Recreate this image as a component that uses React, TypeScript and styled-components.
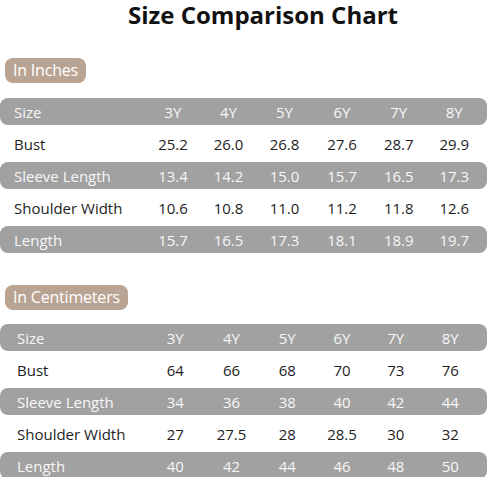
import React from "react";
import styled, { createGlobalStyle } from "styled-components";

const Global = createGlobalStyle`
  html, body { margin: 0; padding: 0; background: #fff; }
  body { font-family: "Open Sans", "Noto Sans", sans-serif; width: 488px; overflow: hidden; }
`;

const Page = styled.div`
  display: flex;
  flex-direction: column;
  width: 488px;
  height: 477px;
`;

const Title = styled.h1`
  margin: 0;
  font-size: 24px;
  line-height: 30px;
  font-weight: 700;
  color: #111;
  text-align: center;
  padding-left: 38px;
`;

const Pill = styled.div<{ $top: number }>`
  align-self: flex-start;
  margin: ${(p) => p.$top}px 0 0 5px;
  height: 25px;
  padding: 0 8px;
  border-radius: 8px;
  background: #b9a493;
  color: #fff;
  font-size: 16px;
  letter-spacing: -0.2px;
  line-height: 25px;
`;

const Table = styled.div<{ $top: number }>`
  display: flex;
  flex-direction: column;
  margin-top: ${(p) => p.$top}px;
  width: 487px;
`;

const Row = styled.div<{ $shade: boolean; $cols: string }>`
  display: grid;
  grid-template-columns: ${(p) => p.$cols};
  align-items: center;
  height: ${(p) => (p.$shade ? 27 : 37)}px;
  border-radius: 8px;
  background: ${(p) => (p.$shade ? "#a1a1a1" : "transparent")};
  color: ${(p) => (p.$shade ? "#f7f7f7" : "#1e1e1e")};
  font-size: 15px;
`;

const Label = styled.span<{ $pad: number }>`
  padding-left: ${(p) => p.$pad}px;
  white-space: nowrap;
`;

const Cell = styled.span`
  text-align: center;
`;

type Tbl = { head: string[]; rows: [string, string[]][]; cols: string; pad: number };

const sizes = ["3Y", "4Y", "5Y", "6Y", "7Y", "8Y"];

const inches: Tbl = {
  head: sizes,
  cols: "145px 56px 55px 57px 58px 55.5px 55.5px",
  pad: 14,
  rows: [
    ["Bust", ["25.2", "26.0", "26.8", "27.6", "28.7", "29.9"]],
    ["Sleeve Length", ["13.4", "14.2", "15.0", "15.7", "16.5", "17.3"]],
    ["Shoulder Width", ["10.6", "10.8", "11.0", "11.2", "11.8", "12.6"]],
    ["Length", ["15.7", "16.5", "17.3", "18.1", "18.9", "19.7"]],
  ],
};

const cms: Tbl = {
  head: sizes,
  cols: "147px 56.5px 56px 55.5px 54px 53.5px 55.5px",
  pad: 17,
  rows: [
    ["Bust", ["64", "66", "68", "70", "73", "76"]],
    ["Sleeve Length", ["34", "36", "38", "40", "42", "44"]],
    ["Shoulder Width", ["27", "27.5", "28", "28.5", "30", "32"]],
    ["Length", ["40", "42", "44", "46", "48", "50"]],
  ],
};

function SizeTable({ data, top }: { data: Tbl; top: number }) {
  const all: [string, string[]][] = [["Size", data.head], ...data.rows];
  return (
    <Table $top={top}>
      {all.map(([label, vals], i) => (
        <Row key={label} $shade={i % 2 === 0} $cols={data.cols}>
          <Label $pad={data.pad}>{label}</Label>
          {vals.map((v, j) => (
            <Cell key={j}>{v}</Cell>
          ))}
        </Row>
      ))}
    </Table>
  );
}

export default function App() {
  return (
    <Page>
      <Global />
      <Title>Size Comparison Chart</Title>
      <Pill $top={28}>In Inches</Pill>
      <SizeTable data={inches} top={15} />
      <Pill $top={32}>In Centimeters</Pill>
      <SizeTable data={cms} top={14} />
    </Page>
  );
}
